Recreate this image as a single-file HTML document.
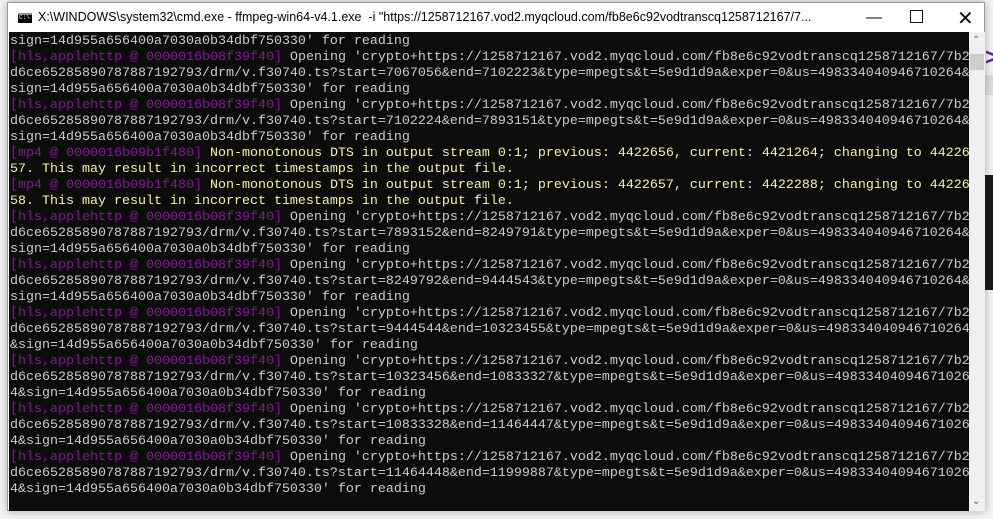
<!DOCTYPE html>
<html><head><meta charset="utf-8"><style>
*{margin:0;padding:0;box-sizing:border-box}
body{width:993px;height:519px;overflow:hidden;background:#f3f3f3;position:relative;font-family:"Liberation Sans",sans-serif}
.win{position:absolute;left:7px;top:2px;width:978px;height:509px;background:#fff;border:1px solid #9a9a9a;box-shadow:0 0 8px rgba(0,0,0,.3)}
.title{position:absolute;left:0;top:0;width:976px;height:29px;background:#fff}
.title .t{position:absolute;left:30px;top:7px;font-size:12.5px;color:#000;white-space:nowrap}
.ico{position:absolute;left:10px;top:10px;width:14px;height:10px;background:#000;border-top:2px solid #888}
.ico:after{content:"C:\\";position:absolute;left:1px;top:-1px;font-size:6px;color:#fff;font-family:"Liberation Mono",monospace}
.ctl{position:absolute;top:6px;font-size:16px;color:#111}
.con{position:absolute;left:1px;top:29px;width:960px;height:479px;background:#0c0c0c;overflow:hidden}
.sb{position:absolute;left:961px;top:29px;width:16px;height:479px;background:#f0f0f0}
.thumb{position:absolute;left:1px;top:22px;width:14px;height:16px;background:#cdcdcd}
pre{font-family:"Liberation Mono",monospace;font-size:13.33px;line-height:16px;color:#cccccc;position:absolute;left:1px;top:2px;white-space:pre}
.p{color:#881798}.y{color:#f9f1a5}
</style></head><body>
<div style="position:absolute;left:985px;top:45px;width:8px;height:25px;color:#5b2a9a;font-size:24px;font-weight:bold;line-height:25px">&gt;</div>
<div style="position:absolute;left:985px;top:75px;width:8px;height:20px;background:#ddd"></div>
<div style="position:absolute;left:985px;top:175px;width:8px;height:115px;background:#1a1a1a"></div>
<div class="win">
<div class="title"><div class="ico"></div><div class="t">X:\WINDOWS\system32\cmd.exe - ffmpeg-win64-v4.1.exe &nbsp;-i "https://1258712167.vod2.myqcloud.com/fb8e6c92vodtranscq1258712167/7...</div>
<div class="ctl" style="left:858px">&#8212;</div>
<div class="ctl" style="left:902px;top:7px;width:13px;height:13px;border:1.3px solid #111"></div>
<div class="ctl" style="left:949px;top:3px;font-size:20px">&#10005;</div>
</div>
<div class="con"><pre>sign=14d955a656400a7030a0b34dbf750330' for reading
<span class="p">[hls,applehttp @ 0000016b08f39f40]</span> Opening 'crypto+https://1258712167.vod2.myqcloud.com/fb8e6c92vodtranscq1258712167/7b2
d6ce65285890787887192793/drm/v.f30740.ts?start=7067056&amp;end=7102223&amp;type=mpegts&amp;t=5e9d1d9a&amp;exper=0&amp;us=498334040946710264&amp;
sign=14d955a656400a7030a0b34dbf750330' for reading
<span class="p">[hls,applehttp @ 0000016b08f39f40]</span> Opening 'crypto+https://1258712167.vod2.myqcloud.com/fb8e6c92vodtranscq1258712167/7b2
d6ce65285890787887192793/drm/v.f30740.ts?start=7102224&amp;end=7893151&amp;type=mpegts&amp;t=5e9d1d9a&amp;exper=0&amp;us=498334040946710264&amp;
sign=14d955a656400a7030a0b34dbf750330' for reading
<span class="p">[mp4 @ 0000016b09b1f480]</span><span class="y"> Non-monotonous DTS in output stream 0:1; previous: 4422656, current: 4421264; changing to 44226
57. This may result in incorrect timestamps in the output file.</span>
<span class="p">[mp4 @ 0000016b09b1f480]</span><span class="y"> Non-monotonous DTS in output stream 0:1; previous: 4422657, current: 4422288; changing to 44226
58. This may result in incorrect timestamps in the output file.</span>
<span class="p">[hls,applehttp @ 0000016b08f39f40]</span> Opening 'crypto+https://1258712167.vod2.myqcloud.com/fb8e6c92vodtranscq1258712167/7b2
d6ce65285890787887192793/drm/v.f30740.ts?start=7893152&amp;end=8249791&amp;type=mpegts&amp;t=5e9d1d9a&amp;exper=0&amp;us=498334040946710264&amp;
sign=14d955a656400a7030a0b34dbf750330' for reading
<span class="p">[hls,applehttp @ 0000016b08f39f40]</span> Opening 'crypto+https://1258712167.vod2.myqcloud.com/fb8e6c92vodtranscq1258712167/7b2
d6ce65285890787887192793/drm/v.f30740.ts?start=8249792&amp;end=9444543&amp;type=mpegts&amp;t=5e9d1d9a&amp;exper=0&amp;us=498334040946710264&amp;
sign=14d955a656400a7030a0b34dbf750330' for reading
<span class="p">[hls,applehttp @ 0000016b08f39f40]</span> Opening 'crypto+https://1258712167.vod2.myqcloud.com/fb8e6c92vodtranscq1258712167/7b2
d6ce65285890787887192793/drm/v.f30740.ts?start=9444544&amp;end=10323455&amp;type=mpegts&amp;t=5e9d1d9a&amp;exper=0&amp;us=498334040946710264
&amp;sign=14d955a656400a7030a0b34dbf750330' for reading
<span class="p">[hls,applehttp @ 0000016b08f39f40]</span> Opening 'crypto+https://1258712167.vod2.myqcloud.com/fb8e6c92vodtranscq1258712167/7b2
d6ce65285890787887192793/drm/v.f30740.ts?start=10323456&amp;end=10833327&amp;type=mpegts&amp;t=5e9d1d9a&amp;exper=0&amp;us=49833404094671026
4&amp;sign=14d955a656400a7030a0b34dbf750330' for reading
<span class="p">[hls,applehttp @ 0000016b08f39f40]</span> Opening 'crypto+https://1258712167.vod2.myqcloud.com/fb8e6c92vodtranscq1258712167/7b2
d6ce65285890787887192793/drm/v.f30740.ts?start=10833328&amp;end=11464447&amp;type=mpegts&amp;t=5e9d1d9a&amp;exper=0&amp;us=49833404094671026
4&amp;sign=14d955a656400a7030a0b34dbf750330' for reading
<span class="p">[hls,applehttp @ 0000016b08f39f40]</span> Opening 'crypto+https://1258712167.vod2.myqcloud.com/fb8e6c92vodtranscq1258712167/7b2
d6ce65285890787887192793/drm/v.f30740.ts?start=11464448&amp;end=11999887&amp;type=mpegts&amp;t=5e9d1d9a&amp;exper=0&amp;us=49833404094671026
4&amp;sign=14d955a656400a7030a0b34dbf750330' for reading</pre></div>
<div class="sb"><div style="position:absolute;left:3px;top:3px;font-size:10px;color:#606060">&#8963;</div><div class="thumb"></div><div style="position:absolute;left:3px;bottom:4px;font-size:10px;color:#606060">&#8964;</div></div>
</div>
</body></html>
